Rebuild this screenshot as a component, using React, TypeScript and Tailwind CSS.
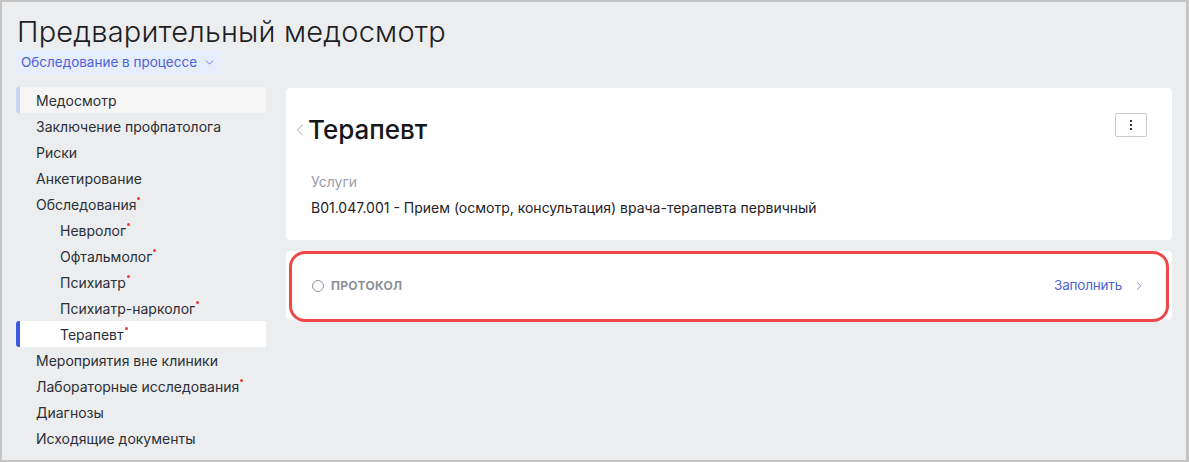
import { ChevronDown, ChevronLeft, ChevronRight } from "lucide-react";

type NavItem = { label: string; sub?: boolean; dot?: boolean; state?: "soft" | "active" };

const nav: NavItem[] = [
  { label: "Медосмотр", state: "soft" },
  { label: "Заключение профпатолога" },
  { label: "Риски" },
  { label: "Анкетирование" },
  { label: "Обследования", dot: true },
  { label: "Невролог", sub: true, dot: true },
  { label: "Офтальмолог", sub: true, dot: true },
  { label: "Психиатр", sub: true, dot: true },
  { label: "Психиатр-нарколог", sub: true, dot: true },
  { label: "Терапевт", sub: true, dot: true, state: "active" },
  { label: "Мероприятия вне клиники" },
  { label: "Лабораторные исследования", dot: true },
  { label: "Диагнозы" },
  { label: "Исходящие документы" },
];

function Sidebar() {
  return (
    <nav className="w-[250px] shrink-0 flex flex-col">
      {nav.map((item) => {
        const base = "relative h-[26px] flex items-center text-[14px] text-[#2b2f36] rounded-l-[3px]";
        const bg =
          item.state === "active"
            ? "bg-white border-l-4 border-[#3b5bdb]"
            : item.state === "soft"
            ? "bg-[#f6f6f7] border-l-4 border-[#c9d3f5]"
            : "border-l-4 border-transparent";
        return (
          <div key={item.label} className={`${base} ${bg} ${item.sub ? "pl-[40px]" : "pl-[16px]"}`}>
            <span className="relative">
              {item.label}
              {item.dot && (
                <span className="absolute -right-[4px] top-[3px] w-[3px] h-[3px] rounded-full bg-[#ef3b3b]" />
              )}
            </span>
          </div>
        );
      })}
    </nav>
  );
}

export default function App() {
  return (
    <div
      className="w-[1189px] h-[462px] bg-[#ecedef] border-t-2 border-l-2 border-b-2 border-r-[3px] border-[#c4c4c4] overflow-hidden"
      style={{ fontFamily: "Inter, 'Noto Sans', sans-serif" }}
    >
      <div className="pl-[14px] pr-[14px] pt-[12px]">
        <h1 className="text-[29px] leading-[36px] text-[#1d1f24] font-light tracking-[0.2px] pl-[1px]">
          Предварительный медосмотр
        </h1>
        <button className="mt-[0px] h-[24px] px-[5px] rounded-[4px] bg-[#e6edfc] text-[#4d63d6] text-[13.5px] flex items-center gap-[6px]">
          Обследование в процессе
          <ChevronDown size={13} strokeWidth={1.5} />
        </button>

        <div className="mt-[13px] flex gap-[20px]">
          <Sidebar />

          <main className="flex-1 flex flex-col gap-[11px] pt-[1px]">
            <section className="bg-white rounded-[4px] h-[152px] pl-[4px] pr-[25px] pt-[25px]">
              <div className="flex items-start justify-between">
                <div className="flex items-center">
                  <ChevronLeft size={20} strokeWidth={1.1} className="text-[#9aa0a8] -mr-[2px]" />
                  <h2 className="text-[26px] leading-[34px] font-medium text-[#15171b]">Терапевт</h2>
                </div>
                <button className="w-[32px] h-[24px] border border-[#c8cbd1] rounded-[2px] flex items-center justify-center">
                  <span className="flex flex-col gap-[2px]">
                    <span className="w-[2px] h-[2px] bg-[#333]" />
                    <span className="w-[2px] h-[2px] bg-[#333]" />
                    <span className="w-[2px] h-[2px] bg-[#333]" />
                  </span>
                </button>
              </div>
              <div className="pl-[21px] mt-[25px]">
                <div className="text-[14px] text-[#9a9ea6] leading-[20px]">Услуги</div>
                <div className="text-[14px] text-[#1f2227] leading-[20px] mt-[6px]">
                  B01.047.001 - Прием (осмотр, консультация) врача-терапевта первичный
                </div>
              </div>
            </section>

            <section className="relative bg-white rounded-[4px] h-[69px] flex items-center justify-between pl-[26px] pr-[26px]">
              <div className="flex items-center gap-[7px]">
                <span className="w-[12px] h-[12px] rounded-full border border-[#8e939b]" />
                <span className="text-[12px] font-bold text-[#8b9098] tracking-[0.3px]">ПРОТОКОЛ</span>
              </div>
              <div className="flex items-center gap-[10px] text-[#5064d6] text-[13.5px] tracking-[-0.2px]">
                Заполнить
                <ChevronRight size={14} strokeWidth={1.3} />
              </div>
              <div className="absolute left-[3px] right-[3px] top-[0px] -bottom-[2px] border-[3px] border-[#f04747] rounded-[16px] pointer-events-none" />
            </section>
          </main>
        </div>
      </div>
    </div>
  );
}
